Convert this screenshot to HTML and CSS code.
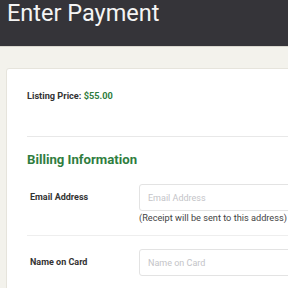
FILE: index.html
```html
<!DOCTYPE html>
<html lang="en">
<head>
  <meta charset="UTF-8">
  <title>Enter Payment</title>
  <link rel="stylesheet" href="styles.css">
</head>
<body>

  <header class="topbar">
    <h1>Enter Payment</h1>
  </header>

  <main class="page">
    <div class="card">

      <div class="listing">
        <span class="listing-label">Listing Price:</span>
        <span class="listing-price">$55.00</span>
      </div>

      <h2 class="section-title">Billing Information</h2>

      <div class="field">
        <label for="email">Email Address</label>
        <div class="control">
          <input id="email" type="text" placeholder="Email Address">
          <div class="hint">(Receipt will be sent to this address)</div>
        </div>
      </div>

      <div class="field field-split">
        <label for="name">Name on Card</label>
        <div class="control">
          <input id="name" type="text" placeholder="Name on Card">
        </div>
      </div>

    </div>
  </main>

</body>
</html>
```

FILE: styles.css
```css
html {
  overflow: hidden;
}
body {
  margin: 0;
  font-family: Roboto, "Liberation Sans", sans-serif;
  background: #f3f2ec;
  color: #333;
  width: 320px;
}
.topbar {
  background: #353439;
  height: 46px;
  border-bottom: 1px solid #d9d7cf;
  padding: 0 7px;
}
.topbar h1 {
  margin: 0;
  font-size: 23.5px;
  font-weight: 400;
  color: #f4f4f4;
  line-height: 27px;
}
.page {
  padding: 21px 0 0 6px;
}
.card {
  background: #fff;
  border: 1px solid #e6e4dc;
  border-radius: 3px;
  padding: 0 0 20px 20px;
}
.listing {
  font-size: 9.2px;
  font-weight: 700;
  color: #333;
  padding: 21px 0 35px;
  border-bottom: 1px solid #e8e8e8;
}
.listing-price {
  color: #2f7d40;
}
.section-title {
  margin: 0;
  padding: 15px 0 17px;
  font-size: 13.2px;
  font-weight: 700;
  color: #2f7d40;
}
.field {
  display: flex;
  padding-bottom: 12px;
}
.field-split {
  border-top: 1px solid #eee;
  padding-top: 13px;
}
.field label {
  width: 109px;
  flex: none;
  font-size: 9px;
  font-weight: 700;
  color: #333;
  padding: 8px 0 0 3px;
}
.control {
  flex: 1;
}
.control input {
  display: block;
  box-sizing: border-box;
  width: 100%;
  height: 27px;
  border: 1px solid #e3e3e3;
  border-radius: 3px;
  padding: 0 8px;
  font-family: inherit;
  font-size: 9px;
}
.control input::placeholder {
  color: #c4c4c8;
}
.hint {
  font-size: 9.2px;
  color: #444;
  margin-top: 1px;
}
```
